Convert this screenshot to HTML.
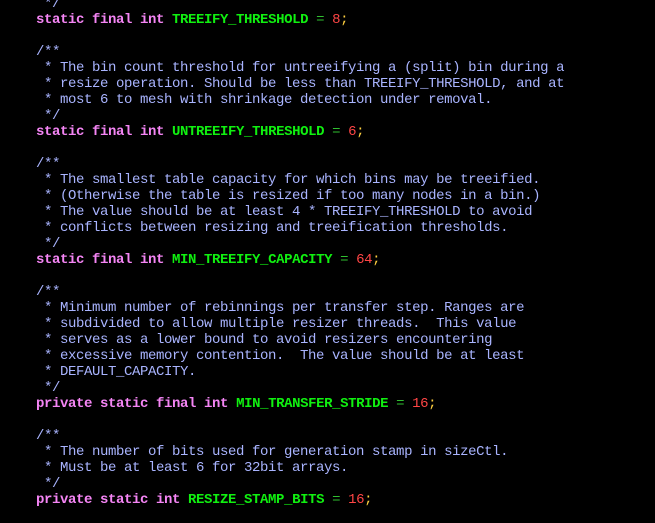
<!DOCTYPE html>
<html><head><meta charset="utf-8"><style>
html,body{margin:0;padding:0;background:#000;width:655px;height:523px;overflow:hidden}
pre{margin:0;position:absolute;left:36px;top:-4px;font-family:"Liberation Mono",monospace;font-size:14px;letter-spacing:-0.4px;line-height:16px;color:#a9b4ff}
.k{color:#f585f5;font-weight:bold}
.i{color:#10f010;font-weight:bold}
.e{color:#30c030}
.n{color:#ff4545}
.s{color:#ffd040}
</style></head><body><pre> */
<span class="k">static final int</span> <span class="i">TREEIFY_THRESHOLD</span> <span class="e">=</span> <span class="n">8</span><span class="s">;</span>

/**
 * The bin count threshold for untreeifying a (split) bin during a
 * resize operation. Should be less than TREEIFY_THRESHOLD, and at
 * most 6 to mesh with shrinkage detection under removal.
 */
<span class="k">static final int</span> <span class="i">UNTREEIFY_THRESHOLD</span> <span class="e">=</span> <span class="n">6</span><span class="s">;</span>

/**
 * The smallest table capacity for which bins may be treeified.
 * (Otherwise the table is resized if too many nodes in a bin.)
 * The value should be at least 4 * TREEIFY_THRESHOLD to avoid
 * conflicts between resizing and treeification thresholds.
 */
<span class="k">static final int</span> <span class="i">MIN_TREEIFY_CAPACITY</span> <span class="e">=</span> <span class="n">64</span><span class="s">;</span>

/**
 * Minimum number of rebinnings per transfer step. Ranges are
 * subdivided to allow multiple resizer threads.  This value
 * serves as a lower bound to avoid resizers encountering
 * excessive memory contention.  The value should be at least
 * DEFAULT_CAPACITY.
 */
<span class="k">private static final int</span> <span class="i">MIN_TRANSFER_STRIDE</span> <span class="e">=</span> <span class="n">16</span><span class="s">;</span>

/**
 * The number of bits used for generation stamp in sizeCtl.
 * Must be at least 6 for 32bit arrays.
 */
<span class="k">private static int</span> <span class="i">RESIZE_STAMP_BITS</span> <span class="e">=</span> <span class="n">16</span><span class="s">;</span></pre></body></html>
